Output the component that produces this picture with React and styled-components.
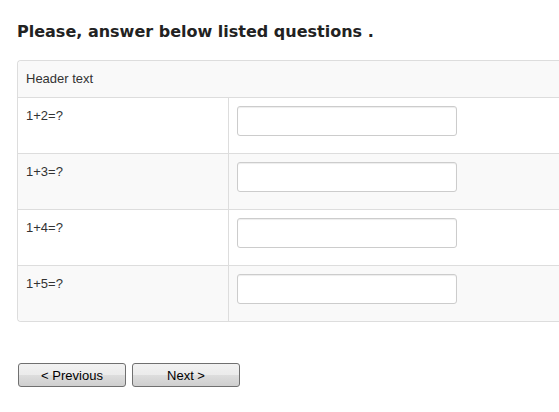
import styled, { createGlobalStyle } from 'styled-components';

const questions = ['1+2=?', '1+3=?', '1+4=?', '1+5=?'];

const GlobalStyle = createGlobalStyle`
  html, body {
    margin: 0;
    padding: 0;
    background: #fff;
    overflow: hidden;
  }
  body {
    font-family: "Liberation Sans", Arial, sans-serif;
    font-size: 13px;
    color: #333;
  }
`;

const Page = styled.div`
  padding: 0 17px;
  width: 600px;
`;

const Title = styled.h3`
  margin: 0;
  padding-top: 21px;
  height: 39px;
  font-family: "DejaVu Sans", Verdana, sans-serif;
  font-size: 16px;
  font-weight: bold;
  line-height: 21px;
  color: #222;
`;

const Table = styled.table`
  width: 590px;
  border-collapse: separate;
  border-spacing: 0;
  border: 1px solid #ddd;
  border-right: 0;
  border-radius: 4px;
`;

const HeadCell = styled.th`
  text-align: left;
  font-weight: normal;
  padding: 8px;
  line-height: 20px;
  background: #f9f9f9;
  border-top-left-radius: 4px;
`;

const Row = styled.tr`
  background: ${p => (p.$striped ? '#f9f9f9' : '#fff')};
`;

const Cell = styled.td`
  padding: 8px;
  line-height: 20px;
  vertical-align: top;
  border-top: 1px solid #ddd;
  border-left: ${p => (p.$divided ? '1px solid #ddd' : '0')};
  width: ${p => (p.$width ? p.$width : 'auto')};
  ${p => p.$last && p.$first ? 'border-bottom-left-radius: 4px;' : ''}
`;

const Input = styled.input`
  display: block;
  box-sizing: border-box;
  width: 220px;
  height: 30px;
  margin: 0 0 9px;
  padding: 4px 6px;
  border: 1px solid #ccc;
  border-radius: 3px;
  background: #fff;
  box-shadow: inset 0 1px 1px rgba(0, 0, 0, 0.075);
  font: inherit;
`;

const Actions = styled.div`
  display: flex;
  gap: 6px;
  margin-top: 41px;
  padding-left: 1px;
`;

const Button = styled.button`
  width: 108px;
  height: 24px;
  padding: 0;
  border: 1px solid #707070;
  border-radius: 3px;
  background: linear-gradient(#f2f2f2 0%, #ebebeb 50%, #dddddd 51%, #cfcfcf 100%);
  font-family: "Liberation Sans", Arial, sans-serif;
  font-size: 13px;
  color: #000;
`;

export default function App() {
  return (
    <>
      <GlobalStyle />
      <Page>
        <Title>Please, answer below listed questions .</Title>
        <Table>
          <thead>
            <tr>
              <HeadCell colSpan={2}>Header text</HeadCell>
            </tr>
          </thead>
          <tbody>
            {questions.map((q, i) => (
              <Row key={q} $striped={i % 2 === 1}>
                <Cell $width="194px" $first $last={i === questions.length - 1}>{q}</Cell>
                <Cell $divided>
                  <Input type="text" />
                </Cell>
              </Row>
            ))}
          </tbody>
        </Table>
        <Actions>
          <Button>&lt; Previous</Button>
          <Button>Next &gt;</Button>
        </Actions>
      </Page>
    </>
  );
}
